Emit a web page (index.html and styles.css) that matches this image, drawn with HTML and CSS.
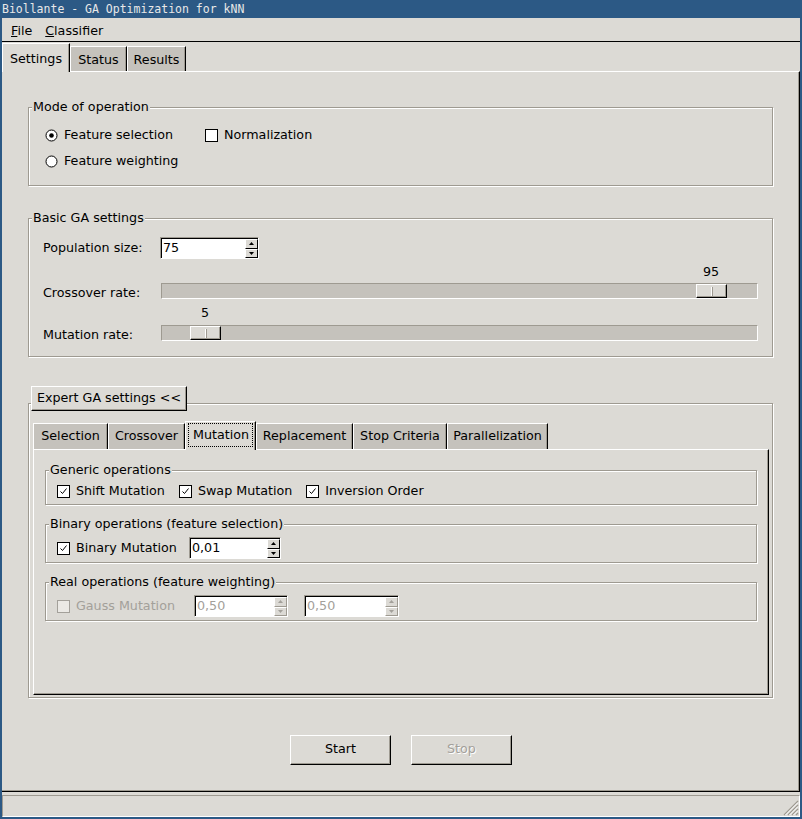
FILE: index.html
```html
<!DOCTYPE html>
<html>
<head>
<meta charset="utf-8">
<title>Biollante - GA Optimization for kNN</title>
<link rel="stylesheet" href="styles.css">
</head>
<body>
<div class="titlebar">Biollante - GA Optimization for kNN</div>
<div class="frame">
  <div class="menubar">
    <span class="menu-item"><u>F</u>ile</span>
    <span class="menu-item"><u>C</u>lassifier</span>
  </div>
  <div class="tabbar">
    <div class="tab active w-settings">Settings</div>
    <div class="tab w-status">Status</div>
    <div class="tab w-results">Results</div>
  </div>
  <div class="page">
    <div class="group g-mode">
      <div class="group-title">Mode of operation</div>
      <div class="body mode-body">
        <div class="mode-row">
          <div class="opt"><svg class="ind" width="13" height="13" viewBox="0 0 13 13"><circle cx="6.5" cy="6.5" r="5.5" fill="#fff" stroke="#000"/><circle cx="6.5" cy="6.5" r="2.3" fill="#000"/></svg>Feature selection</div>
          <div class="opt"><svg class="ind" width="13" height="13" viewBox="0 0 13 13"><rect x="0.5" y="0.5" width="12" height="12" fill="#fff" stroke="#000"/></svg>Normalization</div>
        </div>
        <div class="mode-row">
          <div class="opt"><svg class="ind" width="13" height="13" viewBox="0 0 13 13"><circle cx="6.5" cy="6.5" r="5.5" fill="#fff" stroke="#000"/></svg>Feature weighting</div>
        </div>
      </div>
    </div>

    <div class="group g-basic">
      <div class="group-title">Basic GA settings</div>
      <div class="body basic-body">
        <div class="ga-row spin-row">
          <div class="lbl">Population size:</div>
          <div class="spin spin-pop">
            <div class="spin-text">75</div>
            <div class="spin-btns">
              <div class="sbtn"><svg width="5" height="3" viewBox="0 0 5 3"><path d="M0 3L2.5 0L5 3Z" fill="#000"/></svg></div>
              <div class="sbtn"><svg width="5" height="3" viewBox="0 0 5 3"><path d="M0 0L5 0L2.5 3Z" fill="#000"/></svg></div>
            </div>
          </div>
        </div>
        <div class="ga-row val-row">
          <div></div>
          <div class="val" style="margin-left:543px">95</div>
        </div>
        <div class="ga-row slider-row">
          <div class="lbl slbl">Crossover rate:</div>
          <div class="trough"><div class="handle" style="margin-left:534px"><span class="grip"></span></div></div>
        </div>
        <div class="ga-row val-row">
          <div></div>
          <div class="val" style="margin-left:41px">5</div>
        </div>
        <div class="ga-row slider-row s2">
          <div class="lbl slbl">Mutation rate:</div>
          <div class="trough"><div class="handle" style="margin-left:28px"><span class="grip"></span></div></div>
        </div>
      </div>
    </div>

    <div class="expert-btn">Expert GA settings &lt;&lt;</div>
    <div class="expert">
      <div class="itabbar">
        <div class="itab w-sel">Selection</div>
        <div class="itab w-cross">Crossover</div>
        <div class="itab active w-mut"><span class="focus">Mutation</span></div>
        <div class="itab w-rep">Replacement</div>
        <div class="itab w-stop">Stop Criteria</div>
        <div class="itab w-par">Parallelization</div>
      </div>
      <div class="ipage">
        <div class="group ig ig1">
          <div class="group-title">Generic operations</div>
          <div class="body gen-body">
            <div class="ck"><svg class="ind" width="13" height="13" viewBox="0 0 13 13"><rect x="0.5" y="0.5" width="12" height="12" fill="#fff" stroke="#000"/><path d="M3.5 6.5L5.5 8.5L9.5 3.5" fill="none" stroke="#000"/></svg>Shift Mutation</div>
            <div class="ck"><svg class="ind" width="13" height="13" viewBox="0 0 13 13"><rect x="0.5" y="0.5" width="12" height="12" fill="#fff" stroke="#000"/><path d="M3.5 6.5L5.5 8.5L9.5 3.5" fill="none" stroke="#000"/></svg>Swap Mutation</div>
            <div class="ck"><svg class="ind" width="13" height="13" viewBox="0 0 13 13"><rect x="0.5" y="0.5" width="12" height="12" fill="#fff" stroke="#000"/><path d="M3.5 6.5L5.5 8.5L9.5 3.5" fill="none" stroke="#000"/></svg>Inversion Order</div>
          </div>
        </div>
        <div class="group ig ig2">
          <div class="group-title">Binary operations (feature selection)</div>
          <div class="body op-body">
            <div class="ck ck-bin"><svg class="ind" width="13" height="13" viewBox="0 0 13 13"><rect x="0.5" y="0.5" width="12" height="12" fill="#fff" stroke="#000"/><path d="M3.5 6.5L5.5 8.5L9.5 3.5" fill="none" stroke="#000"/></svg>Binary Mutation</div>
            <div class="spin spin-bin">
              <div class="spin-text">0,01</div>
              <div class="spin-btns">
                <div class="sbtn"><svg width="5" height="3" viewBox="0 0 5 3"><path d="M0 3L2.5 0L5 3Z" fill="#000"/></svg></div>
                <div class="sbtn"><svg width="5" height="3" viewBox="0 0 5 3"><path d="M0 0L5 0L2.5 3Z" fill="#000"/></svg></div>
              </div>
            </div>
          </div>
        </div>
        <div class="group ig ig2">
          <div class="group-title">Real operations (feature weighting)</div>
          <div class="body op-body">
            <div class="ck ck-real dis"><svg class="ind" width="13" height="13" viewBox="0 0 13 13"><rect x="0.5" y="0.5" width="12" height="12" fill="#ebe9e5" stroke="#a3a09a"/></svg>Gauss Mutation</div>
            <div class="spin dis spin-r1">
              <div class="spin-text">0,50</div>
              <div class="spin-btns">
                <div class="sbtn"><svg width="5" height="3" viewBox="0 0 5 3"><path d="M0 3L2.5 0L5 3Z" fill="#a3a09a"/></svg></div>
                <div class="sbtn"><svg width="5" height="3" viewBox="0 0 5 3"><path d="M0 0L5 0L2.5 3Z" fill="#a3a09a"/></svg></div>
              </div>
            </div>
            <div class="spin dis spin-r2">
              <div class="spin-text">0,50</div>
              <div class="spin-btns">
                <div class="sbtn"><svg width="5" height="3" viewBox="0 0 5 3"><path d="M0 3L2.5 0L5 3Z" fill="#a3a09a"/></svg></div>
                <div class="sbtn"><svg width="5" height="3" viewBox="0 0 5 3"><path d="M0 0L5 0L2.5 3Z" fill="#a3a09a"/></svg></div>
              </div>
            </div>
          </div>
        </div>
      </div>
    </div>

    <div class="actions">
      <div class="btn">Start</div>
      <div class="btn disabled">Stop</div>
    </div>
  </div>
  <div class="status">
    <svg class="grip-corner" width="18" height="18" viewBox="0 0 18 18">
      <path d="M17 3L3 17M17 7L7 17M17 11L11 17M17 15L15 17" stroke="#9e9a91" stroke-width="1.2"/>
      <path d="M17 4.5L4.5 17M17 8.5L8.5 17M17 12.5L12.5 17" stroke="#fff" stroke-width="1"/>
    </svg>
  </div>
</div>
</body>
</html>
```
FILE: styles.css
```css
* { box-sizing: border-box; }
html, body { margin: 0; padding: 0; }
body {
  width: 802px;
  height: 819px;
  overflow: hidden;
  background: #dcdad5;
  font-family: "DejaVu Sans", "Noto Sans", sans-serif;
  font-size: 12.7px;
  line-height: 14px;
  color: #000;
}
.titlebar {
  height: 18px;
  background: #2c5985;
  color: #e8e8e8;
  font-family: "DejaVu Sans Mono", "Liberation Mono", monospace;
  font-size: 11.5px;
  line-height: 18px;
  padding-left: 2px;
  white-space: nowrap;
}
.frame {
  height: 801px;
  border: 2px solid #2c5985;
  border-top: 0;
  display: flex;
  flex-direction: column;
}
.menubar {
  height: 24px;
  flex: none;
  border-bottom: 1px solid #000;
  display: flex;
  padding: 6px 0 0 2px;
}
.menu-item { padding: 0 7px; }
.menu-item + .menu-item { margin-left: -1px; }
.menu-item u { text-decoration: underline; }

.tabbar {
  height: 28px;
  flex: none;
  margin-top: 1px;
  display: flex;
  align-items: flex-end;
  position: relative;
  z-index: 1;
}
.tab, .itab {
  background: #c5c2bc;
  border-top: 1px solid #fff;
  border-left: 1px solid #fff;
  border-right: 1px solid #000;
  box-shadow: inset -1px 0 0 #9e9a91;
  text-align: center;
  white-space: nowrap;
}
.tab { height: 25px; padding-top: 6px; }
.tab.active { height: 29px; margin-bottom: -1px; background: #dcdad5; padding-top: 8px; }
.w-settings { width: 68px; }
.w-status { width: 57px; }
.w-results { width: 59px; }

.page {
  height: 721px;
  flex: none;
  border-top: 1px solid #fff;
  border-right: 1px solid #000;
  border-bottom: 1px solid #000;
  box-shadow: inset -1px -1px 0 #9e9a91;
  padding: 0 26px;
  display: flex;
  flex-direction: column;
}

.group {
  border: 1px solid #9e9a91;
  box-shadow: 1px 1px 0 #fff, inset 1px 1px 0 #fff;
  display: flex;
  flex-direction: column;
  align-items: flex-start;
  flex: none;
}
.group-title {
  margin: -8px 0 0 3px;
  padding: 0 1px;
  background: #dcdad5;
  line-height: 14px;
  white-space: nowrap;
}
.body { align-self: stretch; }

.g-mode { margin-top: 35px; }
.mode-body { padding: 14px 0 17px 16px; }
.mode-row { display: grid; grid-template-columns: 160px auto; height: 14px; }
.mode-row + .mode-row { margin-top: 12px; }
.opt, .ck { display: flex; align-items: center; gap: 6px; white-space: nowrap; }
.ind { flex: none; display: block; }

.g-basic { margin-top: 32px; }
.basic-body { padding: 12px 14px 14px 14px; }
.ga-row { display: grid; grid-template-columns: 117px 598px; }
.spin-row { height: 22px; align-items: center; }
.val-row { height: 14px; margin-top: 6px; }
.slider-row { height: 17px; margin-top: 4px; }
.slider-row.s2 { margin-top: 5px; }
.slbl { margin-top: 3px; }
.trough {
  margin-left: 1px;
  width: 597px;
  height: 16px;
  background: #c5c2bc;
  border-top: 1px solid #9e9a91;
  border-left: 1px solid #9e9a91;
  border-bottom: 1px solid #fff;
  border-right: 1px solid #fff;
  display: flex;
}
.handle {
  width: 31px;
  height: 14px;
  background: #dcdad5;
  border-top: 1px solid #fff;
  border-left: 1px solid #fff;
  border-right: 1px solid #000;
  border-bottom: 1px solid #000;
  box-shadow: inset -1px -1px 0 #9e9a91;
  display: flex;
  align-items: center;
  justify-content: center;
}
.grip {
  width: 2px;
  height: 9px;
  border-left: 1px solid #fff;
  border-right: 1px solid #9e9a91;
}

.spin {
  height: 22px;
  display: flex;
  background: #fff;
  border-top: 1px solid #9e9a91;
  border-left: 1px solid #9e9a91;
  border-right: 1px solid #fff;
  border-bottom: 1px solid #fff;
  box-shadow: inset 1px 1px 0 #000;
  flex: none;
}
.spin-text { flex: 1; padding: 3px 0 0 2px; }
.spin-btns { width: 13px; padding-top: 1px; display: flex; flex-direction: column; }
.sbtn {
  flex: 1;
  background: #dcdad5;
  border-top: 1px solid #fff;
  border-left: 1px solid #fff;
  border-right: 1px solid #000;
  border-bottom: 1px solid #000;
  display: flex;
  align-items: center;
  justify-content: center;
}
.sbtn svg { display: block; }
.spin.dis { color: #a3a09a; }
.spin.dis .sbtn { border-right-color: #9e9a91; border-bottom-color: #9e9a91; }
.spin-pop { width: 99px; }
.spin-bin { width: 92px; }
.spin-r1 { width: 94px; }
.spin-r2 { width: 95px; margin-left: 16px; }

.expert-btn {
  align-self: flex-start;
  margin: 29px 0 0 3px;
  width: 156px;
  height: 25px;
  flex: none;
  position: relative;
  z-index: 1;
  background: #dcdad5;
  border-top: 1px solid #fff;
  border-left: 1px solid #fff;
  border-right: 1px solid #000;
  border-bottom: 1px solid #000;
  box-shadow: inset -1px -1px 0 #9e9a91;
  text-align: center;
  padding-top: 4px;
  white-space: nowrap;
}
.expert {
  margin-top: -8px;
  height: 295px;
  flex: none;
  border: 1px solid #9e9a91;
  box-shadow: 1px 1px 0 #fff, inset 1px 1px 0 #fff;
  padding: 17px 3px 2px 4px;
  display: flex;
  flex-direction: column;
}
.itabbar {
  height: 28px;
  flex: none;
  display: flex;
  align-items: flex-end;
  position: relative;
  z-index: 1;
}
.itab { height: 26px; padding-top: 5px; }
.itab.active { height: 29px; margin-bottom: -1px; background: #dcdad5; padding-top: 1px; }
.focus {
  display: inline-block;
  border: 1px dotted #000;
  padding: 4px 3px 4px 4px;
}
.w-sel { width: 75px; }
.w-cross { width: 77px; }
.w-mut { width: 71px; }
.w-rep { width: 97px; }
.w-stop { width: 94px; }
.w-par { width: 101px; }

.ipage {
  height: 246px;
  flex: none;
  border-top: 1px solid #fff;
  border-left: 1px solid #fff;
  border-right: 1px solid #000;
  border-bottom: 1px solid #000;
  box-shadow: inset -1px -1px 0 #9e9a91;
  padding: 0 11px;
  display: flex;
  flex-direction: column;
}
.ig1 { margin-top: 20px; }
.ig2 { margin-top: 19px; }
.gen-body { padding: 7px 0 6px 11px; display: flex; gap: 14px; }
.gen-body .ck { height: 14px; }
.op-body { padding: 6px 0 3px 11px; display: flex; align-items: center; }
.ck-bin { width: 132px; flex: none; }
.ck-real { width: 137px; flex: none; }
.ck.dis { color: #a3a09a; }

.actions {
  margin-top: 37px;
  padding-left: 1px;
  display: flex;
  justify-content: center;
  gap: 20px;
  flex: none;
}
.btn {
  width: 101px;
  height: 30px;
  background: #dcdad5;
  border-top: 1px solid #fff;
  border-left: 1px solid #fff;
  border-right: 1px solid #000;
  border-bottom: 1px solid #000;
  box-shadow: inset -1px -1px 0 #9e9a91;
  text-align: center;
  padding-top: 6px;
}
.btn.disabled { color: #a3a09a; text-shadow: 1px 1px 0 #fff; }

.status {
  margin-top: 3px;
  height: 22px;
  flex: none;
  border-top: 1px solid #9e9a91;
  border-left: 1px solid #9e9a91;
  border-bottom: 1px solid #fff;
  border-right: 1px solid #fff;
  display: flex;
  justify-content: flex-end;
  align-items: flex-end;
}
.grip-corner { display: block; }
```
